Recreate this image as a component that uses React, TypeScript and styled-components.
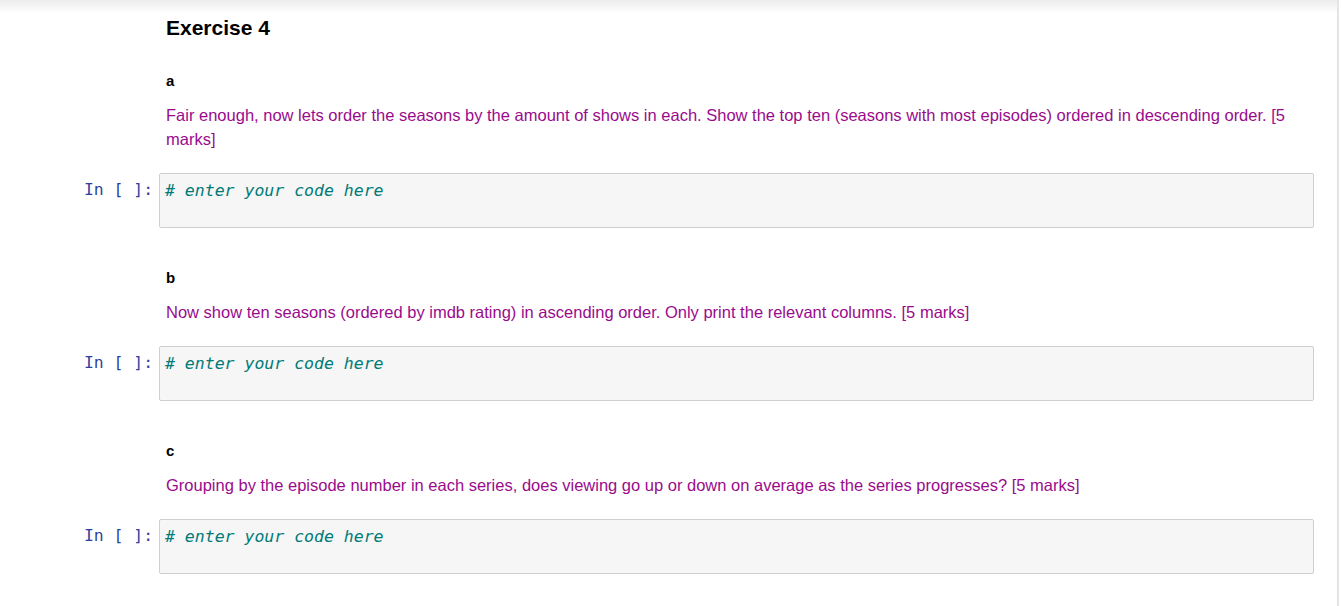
import styled, { createGlobalStyle } from 'styled-components'

const GlobalStyle = createGlobalStyle`
    html, body {
        margin: 0;
        padding: 0;
        background: #fff;
    }
    body {
        font-family: "Liberation Sans", Arial, Helvetica, sans-serif;
    }
`

const Notebook = styled.div`
    width: 1339px;
    min-height: 606px;
    box-sizing: border-box;
    border-right: 2px solid #e4e4e4;
    background: linear-gradient(#ededed, #fff 14px);
    padding-top: 17px;
`

const Cell = styled.div`
    display: grid;
    grid-template-columns: 159px 1fr;
    padding-right: 23px;
`

const Prompt = styled.div`
    font-family: "DejaVu Sans Mono", "Liberation Mono", monospace;
    font-size: 16.4px;
    color: #303f9f;
    text-align: right;
    padding: 7px 6px 0 0;
    white-space: pre;
`

const InputArea = styled.div`
    background: #f6f6f6;
    border: 1px solid #cfcfcf;
    border-radius: 2px;
    padding: 6px 5px;
    box-sizing: border-box;
    height: 55px;
`

const Code = styled.pre`
    margin: 0;
    font-family: "DejaVu Sans Mono", "Liberation Mono", monospace;
    font-size: 16.5px;
    font-style: italic;
    color: #007b78;
    line-height: 22px;
`

const Markdown = styled.div`
    padding-left: 166px;
    padding-right: 40px;
`

const Title = styled.h1`
    font-size: 21px;
    font-weight: bold;
    margin: 0;
    line-height: 22px;
    color: #000;
`

const Sub = styled.h4<{ $top: number }>`
    font-size: 15px;
    font-weight: bold;
    margin: ${p => p.$top}px 0 0;
    line-height: 20px;
    color: #000;
`

const Text = styled.p`
    font-size: 16.5px;
    line-height: 24px;
    color: #990b8c;
    margin: 12px 0 22px;
`

interface IPart {
    label: string
    text: string
}

const parts: IPart[] = [
    {
        label: 'a',
        text: 'Fair enough, now lets order the seasons by the amount of shows in each. Show the top ten (seasons with most episodes) ordered in descending order. [5 marks]',
    },
    {
        label: 'b',
        text: 'Now show ten seasons (ordered by imdb rating) in ascending order. Only print the relevant columns. [5 marks]',
    },
    {
        label: 'c',
        text: 'Grouping by the episode number in each series, does viewing go up or down on average as the series progresses? [5 marks]',
    },
]

function App() {
    return (
        <>
            <GlobalStyle />
            <Notebook>
                <Markdown>
                    <Title>Exercise 4</Title>
                </Markdown>
                {parts.map((part, i) => (
                    <div key={part.label}>
                        <Markdown>
                            <Sub $top={i === 0 ? 32 : 40}>{part.label}</Sub>
                            <Text>{part.text}</Text>
                        </Markdown>
                        <Cell>
                            <Prompt>In [ ]:</Prompt>
                            <InputArea>
                                <Code># enter your code here</Code>
                            </InputArea>
                        </Cell>
                    </div>
                ))}
            </Notebook>
        </>
    )
}

export default App
